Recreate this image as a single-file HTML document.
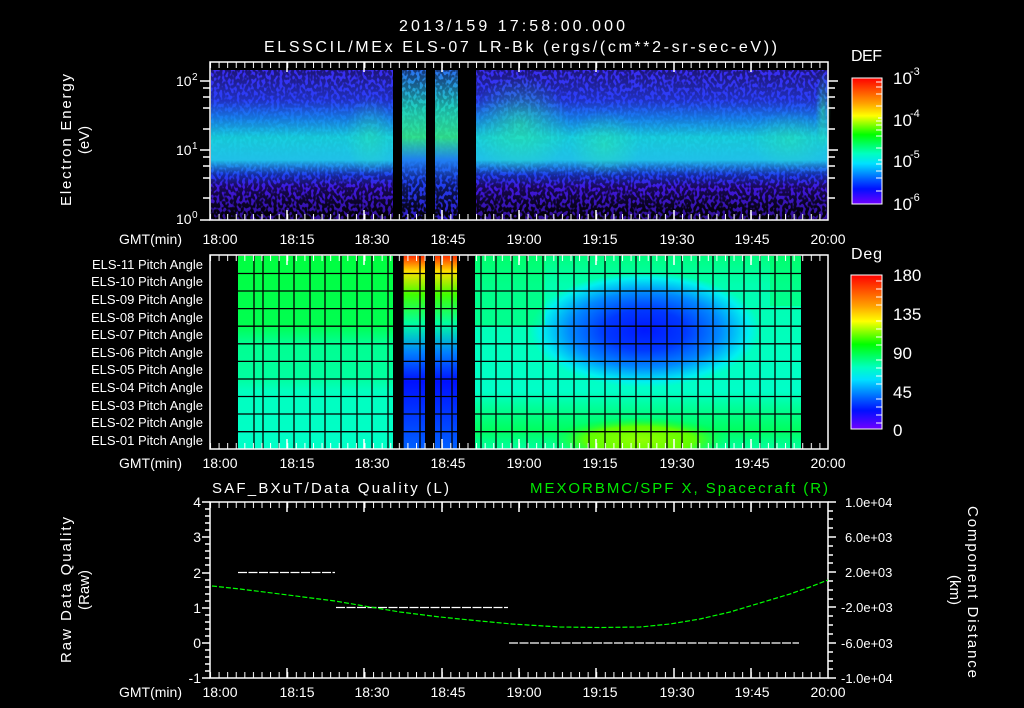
<!DOCTYPE html>
<html><head><meta charset="utf-8"><style>
html,body{margin:0;padding:0;background:#000;width:1024px;height:708px;overflow:hidden}
text{font-family:"Liberation Sans",sans-serif;fill:#fff}
</style></head><body>
<svg width="1024" height="708" viewBox="0 0 1024 708" xmlns="http://www.w3.org/2000/svg">
<defs>
<linearGradient id="spec" x1="0" y1="0" x2="0" y2="1">
<stop offset="0" stop-color="#3a2cf0"/>
<stop offset="0.2" stop-color="#2a40f8"/>
<stop offset="0.32" stop-color="#1880f0"/>
<stop offset="0.45" stop-color="#18d0e0"/>
<stop offset="0.6" stop-color="#20c0e8"/>
<stop offset="0.7" stop-color="#2040f0"/>
<stop offset="0.78" stop-color="#4018e0"/>
<stop offset="1" stop-color="#301090"/>
</linearGradient>
<linearGradient id="spec2" x1="0" y1="0" x2="0" y2="1">
<stop offset="0" stop-color="#2a70f0"/>
<stop offset="0.25" stop-color="#20d0c0"/>
<stop offset="0.45" stop-color="#30e090"/>
<stop offset="0.6" stop-color="#2080f0"/>
<stop offset="0.75" stop-color="#2040f0"/>
<stop offset="1" stop-color="#3018c0"/>
</linearGradient>
<radialGradient id="glow" cx="0.5" cy="0.5" r="0.5">
<stop offset="0" stop-color="#30f0a0" stop-opacity="0.6"/>
<stop offset="1" stop-color="#30f0a0" stop-opacity="0"/>
</radialGradient>
<linearGradient id="defbar" x1="0" y1="0" x2="0" y2="1">
<stop offset="0" stop-color="#ff0000"/>
<stop offset="0.2" stop-color="#ffa000"/>
<stop offset="0.3" stop-color="#ffff00"/>
<stop offset="0.45" stop-color="#00ff00"/>
<stop offset="0.6" stop-color="#00ffc0"/>
<stop offset="0.68" stop-color="#00e0ff"/>
<stop offset="0.8" stop-color="#0060ff"/>
<stop offset="0.88" stop-color="#0010ff"/>
<stop offset="1" stop-color="#7000ff"/>
</linearGradient>
<radialGradient id="blob" cx="645" cy="330" r="115" gradientUnits="userSpaceOnUse" gradientTransform="translate(645 330) scale(1 0.5) translate(-645 -330)">
<stop offset="0" stop-color="#0018ff"/>
<stop offset="0.35" stop-color="#0038ff"/>
<stop offset="0.65" stop-color="#0088ff"/>
<stop offset="0.9" stop-color="#00f0f0"/>
<stop offset="1" stop-color="#00f0f0" stop-opacity="0"/>
</radialGradient>
<radialGradient id="yg" cx="640" cy="440" r="90" gradientUnits="userSpaceOnUse" gradientTransform="translate(640 440) scale(1 0.25) translate(-640 -440)">
<stop offset="0" stop-color="#90ff00"/>
<stop offset="0.6" stop-color="#60ff00"/>
<stop offset="1" stop-color="#00ff40" stop-opacity="0"/>
</radialGradient>
<linearGradient id="rows" x1="0" y1="0" x2="0" y2="1">
<stop offset="0" stop-color="#00ff40"/>
<stop offset="0.36" stop-color="#00ff50"/>
<stop offset="0.45" stop-color="#00ff90"/>
<stop offset="0.64" stop-color="#00ffa0"/>
<stop offset="0.7" stop-color="#00ffc0"/>
<stop offset="1" stop-color="#00ffc8"/>
</linearGradient>
<linearGradient id="rrows" x1="0" y1="0" x2="0" y2="1">
<stop offset="0" stop-color="#00ff80"/>
<stop offset="0.15" stop-color="#00ffb0"/>
<stop offset="0.7" stop-color="#00ffc8"/>
<stop offset="0.8" stop-color="#00ff90"/>
<stop offset="0.9" stop-color="#00ff60"/>
<stop offset="1" stop-color="#00ffa0"/>
</linearGradient>
<linearGradient id="stripe" x1="0" y1="0" x2="0" y2="1">
<stop offset="0" stop-color="#ff3000"/>
<stop offset="0.08" stop-color="#ffe000"/>
<stop offset="0.2" stop-color="#40ff00"/>
<stop offset="0.35" stop-color="#00ffa0"/>
<stop offset="0.5" stop-color="#0080ff"/>
<stop offset="0.65" stop-color="#0010ff"/>
<stop offset="1" stop-color="#0060ff"/>
</linearGradient>
<filter id="speck" x="0" y="0" width="1" height="1">
<feTurbulence type="fractalNoise" baseFrequency="0.35 0.25" numOctaves="1" seed="4"/>
<feColorMatrix type="matrix" values="0 0 0 0 0  0 0 0 0 0  0 0 0 0 0  0 0 0 -9 5.3"/>
</filter>
<linearGradient id="speckmask" x1="0" y1="0" x2="0" y2="1">
<stop offset="0" stop-color="#fff" stop-opacity="0.5"/>
<stop offset="0.3" stop-color="#fff" stop-opacity="0.1"/>
<stop offset="0.6" stop-color="#fff" stop-opacity="0"/>
<stop offset="0.78" stop-color="#fff" stop-opacity="0.6"/>
<stop offset="1" stop-color="#fff" stop-opacity="1"/>
</linearGradient>
<mask id="m1"><rect x="211" y="70" width="617" height="150" fill="url(#speckmask)"/></mask>
<pattern id="tick" x="210" y="0" width="8.583" height="10" patternUnits="userSpaceOnUse"><rect x="0" y="0" width="1" height="10" fill="#fff"/></pattern>
</defs>

<text x="512" y="31" font-size="16" text-anchor="middle" textLength="226">2013/159 17:58:00.000</text>
<text x="264" y="52" font-size="16" textLength="513">ELSSCIL/MEx ELS-07 LR-Bk  (ergs/(cm**2-sr-sec-eV))</text>

<!-- TOP PANEL -->
<rect x="211" y="70" width="182" height="150" fill="url(#spec)"/>
<rect x="402" y="70" width="24" height="150" fill="url(#spec2)"/>
<rect x="435" y="70" width="23" height="150" fill="url(#spec2)"/>
<rect x="476" y="70" width="352" height="150" fill="url(#spec)"/>
<ellipse cx="520" cy="125" rx="50" ry="50" fill="url(#glow)"/>
<ellipse cx="605" cy="145" rx="35" ry="35" fill="url(#glow)" opacity="0.7"/>
<ellipse cx="790" cy="140" rx="40" ry="30" fill="url(#glow)" opacity="0.6"/>
<ellipse cx="823" cy="110" rx="8" ry="40" fill="url(#glow)"/>
<ellipse cx="370" cy="135" rx="25" ry="40" fill="url(#glow)" opacity="0.6"/>
<rect x="211" y="70" width="617" height="150" filter="url(#speck)" mask="url(#m1)"/>
<rect x="393" y="70" width="9" height="150" fill="#000"/>
<rect x="426" y="70" width="9" height="150" fill="#000"/>
<rect x="458" y="70" width="18" height="150" fill="#000"/>
<path d="M210 62H828V220H210Z" fill="none" stroke="#fff" stroke-width="1.5"/>
<rect x="210" y="62" width="618" height="6" fill="url(#tick)"/>
<rect x="210" y="214" width="618" height="6" fill="url(#tick)"/>
<g stroke="#fff" stroke-width="1.5">
<path d="M287 62v10M364 62v10M442 62v10M519 62v10M596 62v10M674 62v10M751 62v10M287 220v-10M364 220v-10M442 220v-10M519 220v-10M596 220v-10M674 220v-10M751 220v-10"/>
<path d="M200 81h10M200 150h10M200 220h10M203 129h7M203 108h7M203 97h7M203 88h7M203 198h7M203 178h7M203 166h7M203 157h7"/>
<path d="M828 81h10M828 150h10M828 129h7M828 108h7M828 97h7M828 88h7M828 198h7M828 178h7M828 166h7M828 157h7"/>
</g>
<text x="176" y="86" font-size="14">10</text><text x="192" y="80" font-size="10">2</text>
<text x="176" y="155" font-size="14">10</text><text x="192" y="149" font-size="10">1</text>
<text x="176" y="224" font-size="14">10</text><text x="192" y="218" font-size="10">0</text>
<text transform="translate(71 140) rotate(-90)" font-size="15" text-anchor="middle" textLength="132">Electron Energy</text>
<text transform="translate(89 140) rotate(-90)" font-size="15" text-anchor="middle">(eV)</text>
<text x="851" y="61" font-size="16" textLength="31">DEF</text>
<rect x="852" y="78" width="30" height="126" fill="url(#defbar)" stroke="#fff" stroke-width="1"/>
<g stroke="#fff"><path d="M876 82h6M876 87h6M876 94h6M876 106h6M878 118h4M876 121h6M876 125h6M876 130h6M876 136h6M876 148h6M878 160h4M876 164h6M876 171h6M876 178h6M876 191h6"/></g>
<text x="893" y="84" font-size="17">10</text><text x="910" y="75" font-size="11">-3</text>
<text x="893" y="126" font-size="17">10</text><text x="910" y="117" font-size="11">-4</text>
<text x="893" y="167" font-size="17">10</text><text x="910" y="158" font-size="11">-5</text>
<text x="893" y="210" font-size="17">10</text><text x="910" y="201" font-size="11">-6</text>
<g font-size="14" text-anchor="middle">
<text x="182" y="244" text-anchor="end">GMT(min)</text>
<text x="220" y="244">18:00</text><text x="297" y="244">18:15</text><text x="372" y="244">18:30</text><text x="448" y="244">18:45</text><text x="524" y="244">19:00</text><text x="600" y="244">19:15</text><text x="677" y="244">19:30</text><text x="752" y="244">19:45</text><text x="828" y="244">20:00</text>
</g>

<!-- MIDDLE PANEL -->
<rect x="238" y="256" width="155" height="193" fill="url(#rows)"/>
<rect x="403" y="256" width="22" height="193" fill="url(#stripe)"/>
<rect x="435" y="256" width="22" height="193" fill="url(#stripe)"/>
<rect x="475" y="256" width="326" height="193" fill="url(#rrows)"/>
<rect x="475" y="256" width="326" height="193" fill="url(#blob)"/>
<rect x="475" y="414" width="326" height="35" fill="url(#yg)"/>
<rect x="475" y="256" width="70" height="70" fill="#00ff50" opacity="0.4"/>
<rect x="770" y="256" width="31" height="50" fill="#00ff50" opacity="0.4"/>
<g stroke="#000" stroke-width="1.3">
<path d="M210 273.5H828M210 291H828M210 308.6H828M210 326.2H828M210 343.8H828M210 361.4H828M210 379H828M210 396.5H828M210 414H828M210 431.7H828"/>
<path d="M254 256v193M263 256v193M279 256v193M294 256v193M310 256v193M325 256v193M341 256v193M357 256v193M372 256v193M388 256v193M403 256v193M420 256v193M441 256v193M452 256v193M481 256v193M496 256v193M512 256v193M527 256v193M543 256v193M558 256v193M574 256v193M589 256v193M605 256v193M620 256v193M636 256v193M651 256v193M667 256v193M682 256v193M698 256v193M713 256v193M729 256v193M744 256v193M760 256v193M775 256v193M791 256v193"/>
</g>
<rect x="801" y="256" width="27" height="193" fill="#000"/>
<path d="M210 255H828V449H210Z" fill="none" stroke="#fff" stroke-width="1.5"/>
<rect x="210" y="255" width="618" height="6" fill="url(#tick)"/>
<rect x="210" y="443" width="618" height="6" fill="url(#tick)"/>
<g stroke="#fff" stroke-width="1.5"><path d="M287 255v10M364 255v10M442 255v10M519 255v10M596 255v10M674 255v10M751 255v10M287 449v-10M364 449v-10M442 449v-10M519 449v-10M596 449v-10M674 449v-10M751 449v-10"/></g>
<g font-size="13" text-anchor="end">
<text x="203" y="269">ELS-11 Pitch Angle</text>
<text x="203" y="286">ELS-10 Pitch Angle</text>
<text x="203" y="304">ELS-09 Pitch Angle</text>
<text x="203" y="322">ELS-08 Pitch Angle</text>
<text x="203" y="339">ELS-07 Pitch Angle</text>
<text x="203" y="357">ELS-06 Pitch Angle</text>
<text x="203" y="374">ELS-05 Pitch Angle</text>
<text x="203" y="392">ELS-04 Pitch Angle</text>
<text x="203" y="410">ELS-03 Pitch Angle</text>
<text x="203" y="427">ELS-02 Pitch Angle</text>
<text x="203" y="445">ELS-01 Pitch Angle</text>
</g>
<text x="851" y="259" font-size="16" textLength="31">Deg</text>
<rect x="851" y="275" width="31" height="154" fill="url(#defbar)" stroke="#fff" stroke-width="1"/>
<g stroke="#fff"><path d="M876 281h6M876 289h6M876 297h6M876 305h6M876 321h6M876 329h6M876 337h6M876 345h6M876 360h6M876 368h6M876 376h6M876 384h6M876 399h6M876 407h6M876 415h6M876 423h6"/></g>
<g font-size="17"><text x="893" y="281">180</text><text x="893" y="320">135</text><text x="893" y="359">90</text><text x="893" y="398">45</text><text x="893" y="436">0</text></g>
<g font-size="14" text-anchor="middle">
<text x="182" y="468" text-anchor="end">GMT(min)</text>
<text x="220" y="468">18:00</text><text x="297" y="468">18:15</text><text x="372" y="468">18:30</text><text x="448" y="468">18:45</text><text x="524" y="468">19:00</text><text x="600" y="468">19:15</text><text x="677" y="468">19:30</text><text x="752" y="468">19:45</text><text x="828" y="468">20:00</text>
</g>

<!-- BOTTOM PANEL -->
<text x="212" y="493" font-size="15" textLength="237">SAF_BXuT/Data Quality (L)</text>
<text x="530" y="493" font-size="15" textLength="298" style="fill:#00e800">MEXORBMC/SPF X, Spacecraft (R)</text>
<path d="M210 502H828V678H210Z" fill="none" stroke="#fff" stroke-width="1.5"/>
<rect x="210" y="502" width="618" height="6" fill="url(#tick)"/>
<rect x="210" y="672" width="618" height="6" fill="url(#tick)"/>
<g stroke="#fff" stroke-width="1.5">
<path d="M287 502v10M364 502v10M442 502v10M519 502v10M596 502v10M674 502v10M751 502v10M287 678v-10M364 678v-10M442 678v-10M519 678v-10M596 678v-10M674 678v-10M751 678v-10"/>
<path d="M202 502h8M202 537h8M202 573h8M202 608h8M202 643h8M202 678h8M205 509h5M205 516h5M205 523h5M205 530h5M205 544h5M205 551h5M205 558h5M205 565h5M205 580h5M205 587h5M205 594h5M205 601h5M205 615h5M205 622h5M205 629h5M205 636h5M205 650h5M205 657h5M205 664h5M205 671h5"/>
<path d="M828 502h8M828 537h8M828 572h8M828 607h8M828 643h8M828 678h8M828 511h5M828 519h5M828 528h5M828 546h5M828 555h5M828 563h5M828 581h5M828 590h5M828 599h5M828 616h5M828 625h5M828 634h5M828 652h5M828 661h5M828 669h5"/>
</g>
<g stroke="#fff" stroke-width="1.2" stroke-dasharray="9 1.5">
<path d="M238 572.5H335M336 607.5H508M509 643H799"/>
</g>
<path d="M212 586 L240 589 L280 594 L335 601 L370 607 L400 612 L440 617 L480 621 L512 624 L560 627 L600 627.5 L640 627 L670 624 L700 619 L730 612 L760 603 L790 594 L810 587 L828 580" fill="none" stroke="#00ff00" stroke-width="1.2" stroke-dasharray="5 2"/>
<g font-size="14" text-anchor="end"><text x="201" y="507">4</text><text x="201" y="542">3</text><text x="201" y="578">2</text><text x="201" y="613">1</text><text x="201" y="648">0</text><text x="201" y="683">-1</text></g>
<g font-size="13"><text x="845" y="507">1.0e+04</text><text x="845" y="542">6.0e+03</text><text x="845" y="577">2.0e+03</text><text x="841" y="612">-2.0e+03</text><text x="841" y="648">-6.0e+03</text><text x="841" y="683">-1.0e+04</text></g>
<text transform="translate(71 590) rotate(-90)" font-size="15" text-anchor="middle" textLength="146">Raw Data Quality</text>
<text transform="translate(89 590) rotate(-90)" font-size="15" text-anchor="middle">(Raw)</text>
<text transform="translate(968 592) rotate(90)" font-size="15" text-anchor="middle" textLength="172">Component Distance</text>
<text transform="translate(950 590) rotate(90)" font-size="15" text-anchor="middle">(km)</text>
<g font-size="14" text-anchor="middle">
<text x="182" y="697" text-anchor="end">GMT(min)</text>
<text x="220" y="697">18:00</text><text x="297" y="697">18:15</text><text x="372" y="697">18:30</text><text x="448" y="697">18:45</text><text x="524" y="697">19:00</text><text x="600" y="697">19:15</text><text x="677" y="697">19:30</text><text x="752" y="697">19:45</text><text x="828" y="697">20:00</text>
</g>
</svg>
</body></html>
